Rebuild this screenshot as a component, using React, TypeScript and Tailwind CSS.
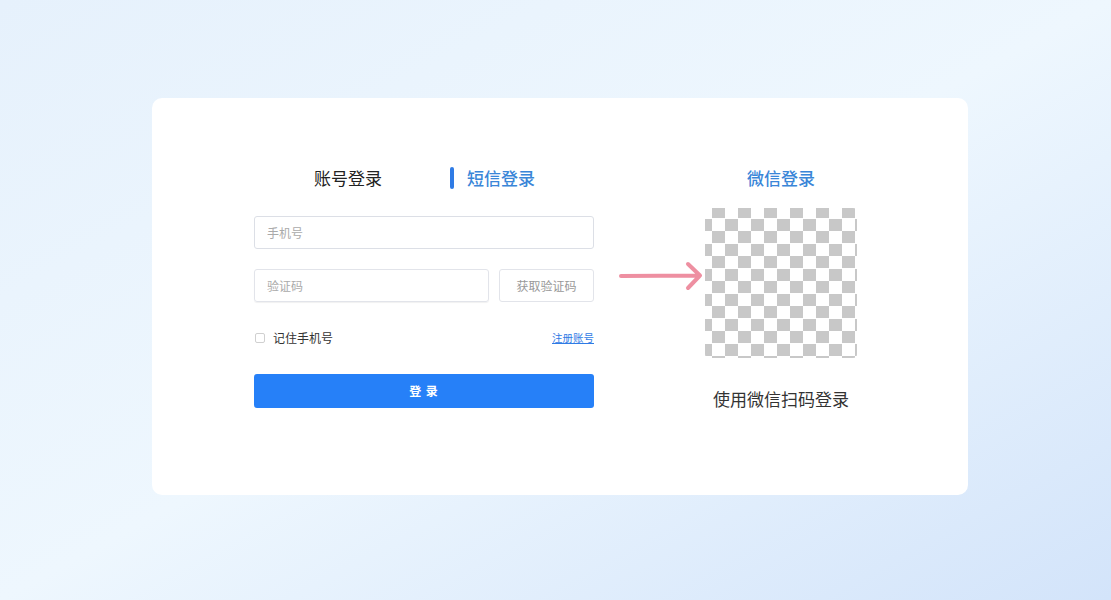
import React from "react";

function SmsForm() {
	return (
		<div className="w-[340px] flex flex-col">
			<div className="flex items-center h-6">
				<span className="ml-[60px] text-[17px] text-[#222]">账号登录</span>
				<span className="ml-[68px] w-1 h-[22px] rounded-sm bg-[#2f7be5]" />
				<span className="ml-[13px] text-[17px] font-medium text-[#3a86d8]">短信登录</span>
			</div>

			<input
				placeholder="手机号"
				className="mt-[26px] h-[33px] w-full rounded-[3px] border border-[#dcdfe6] px-3 text-[12px] outline-none placeholder:text-[#aaa]"
			/>

			<div className="mt-5 flex gap-[10px]">
				<input
					placeholder="验证码"
					className="h-[33px] w-[235px] rounded-[3px] border border-[#e2e4ea] px-3 text-[12px] outline-none placeholder:text-[#aaa] shadow-[0_1px_1px_rgba(0,0,0,0.06)]"
				/>
				<button className="h-[33px] flex-1 rounded-[3px] border border-[#e2e4ea] text-[12px] text-[#999]">
					获取验证码
				</button>
			</div>

			<div className="mt-[29px] flex items-center justify-between h-[14px]">
				<label className="flex items-center gap-2 text-[12px] text-[#333]">
					<span className="ml-px w-[10px] h-[10px] border border-[#d0d0d0] rounded-[2px] bg-white" />
					记住手机号
				</label>
				<a className="text-[10.5px] text-[#2f7be5] underline">注册账号</a>
			</div>

			<button className="mt-[29px] h-[34px] w-full rounded-[3px] bg-[#2680f8] text-[12px] font-bold text-white tracking-[1px]">
				登 录
			</button>
		</div>
	);
}

function WechatLogin() {
	return (
		<div className="w-[152px] flex flex-col items-center">
			<div className="h-6 flex items-center text-[17px] font-medium text-[#3a86d8]">微信登录</div>
			<div className="mt-[18px] w-[152px] h-[150px] rounded-sm bg-[repeating-conic-gradient(#c6c6c6_0_25%,#ffffff_0_50%)] bg-[length:26px_25px] bg-position-[-6px_-2px] opacity-95" />
			<div className="mt-[28px] text-[17px] text-[#333] whitespace-nowrap">使用微信扫码登录</div>
		</div>
	);
}

function App() {
	return (
		<div
			className="w-[1111px] h-[600px] overflow-hidden bg-linear-to-br from-[#e6f1fc] via-[#eef7fe] to-[#d3e4fa] pl-[152px] pt-[98px]"
			style={{ fontFamily: '"Noto Sans CJK SC", "Noto Sans", sans-serif' }}
		>
			<div className="w-[816px] h-[397px] rounded-[10px] bg-white pl-[102px] pt-[68px] flex items-start">
				<SmsForm />
				<div className="w-[111px] pt-[94px] pl-[24px]">
					<svg width="86" height="32" viewBox="0 0 86 32" fill="none">
						<path
							d="M3 16 L82 15.5 M70 4 L82 15.5 L70 28"
							stroke="#ee8fa1"
							strokeWidth="4"
							strokeLinecap="round"
							strokeLinejoin="round"
						/>
					</svg>
				</div>
				<WechatLogin />
			</div>
		</div>
	);
}

export default App;
